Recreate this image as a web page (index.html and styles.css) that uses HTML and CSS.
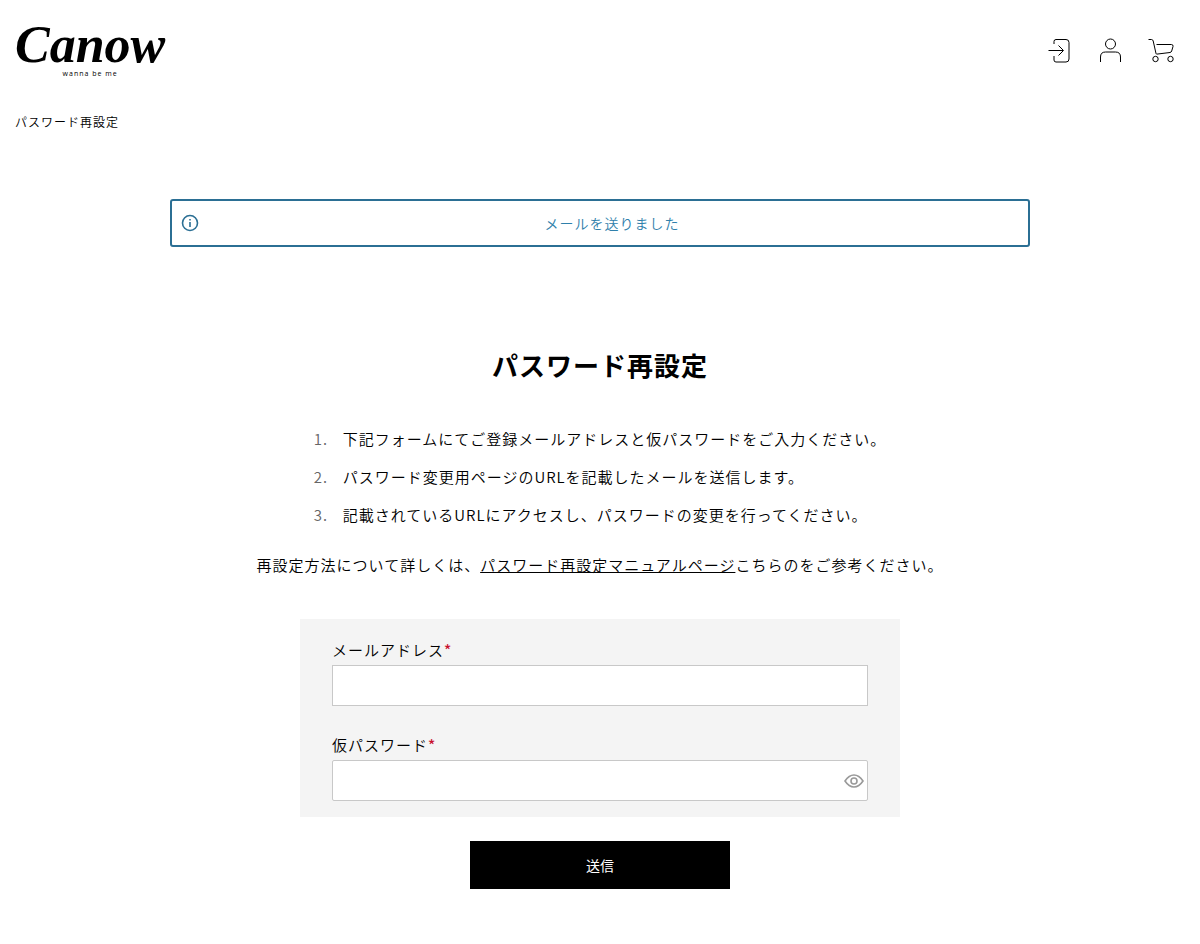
FILE: index.html
```html
<!DOCTYPE html>
<html lang="ja">
<head>
  <meta charset="UTF-8">
  <meta name="viewport" content="width=device-width, initial-scale=1">
  <title>パスワード再設定 | Canow</title>
  <link rel="stylesheet" href="styles.css">
</head>
<body>

<header class="header">
  <a href="#" class="logo">
    <span class="logo-name">Canow</span>
    <span class="logo-sub">wanna be me</span>
  </a>
  <nav class="header-nav">
    <a href="#" aria-label="ログイン">
      <svg width="28" height="28" viewBox="0 0 28 28">
        <path d="M8 8V5.500Q8 3.500 10 3.500H20Q23 3.500 23 6.500V23Q23 26 20 26H10Q8 26 8 24V20M2.500 14.500H17M12.500 9.500L17.500 14.500L12.500 19.500"/>
      </svg>
    </a>
    <a href="#" aria-label="マイページ">
      <svg width="28" height="28" viewBox="0 0 28 28">
        <circle cx="13.500" cy="8" r="5"/>
        <path d="M3.500 26V21Q3.500 16 8.500 16H18.500Q23.500 16 23.500 21V26"/>
      </svg>
    </a>
    <a href="#" aria-label="カート">
      <svg width="28" height="28" viewBox="0 0 28 28">
        <path d="M0.500 3.500H3.500Q4.800 3.500 5.200 5L8 17.500Q8.200 18.200 9 18.100L22 16.500Q23.300 16.300 23.700 15L25 10.500Q25.400 8.500 23.400 8.500H8.500"/>
        <circle cx="7.500" cy="23" r="2.700"/>
        <circle cx="22.500" cy="23" r="2.700"/>
      </svg>
    </a>
  </nav>
</header>

<div class="breadcrumb">パスワード再設定</div>

<main class="main">
  <div class="alert" role="status">
    <svg class="alert-icon" width="18" height="18" viewBox="0 0 18 18">
      <circle cx="9" cy="9" r="7.500"/>
      <path d="M9 8V13M9 5V6.500"/>
    </svg>
    <p>メールを送りました</p>
  </div>

  <h1>パスワード再設定</h1>

  <ol class="steps">
    <li>下記フォームにてご登録メールアドレスと仮パスワードをご入力ください。</li>
    <li>パスワード変更用ページのURLを記載したメールを送信します。</li>
    <li>記載されているURLにアクセスし、パスワードの変更を行ってください。</li>
  </ol>

  <p class="note">再設定方法について詳しくは、<a href="#">パスワード再設定マニュアルページ</a>こちらのをご参考ください。</p>

  <form class="form">
    <div class="form-box">
      <div class="form-group">
        <label for="email">メールアドレス<span class="required">*</span></label>
        <input type="email" id="email">
      </div>
      <div class="form-group">
        <label for="password">仮パスワード<span class="required">*</span></label>
        <div class="password">
          <input type="password" id="password">
          <button type="button" class="toggle" aria-label="パスワードを表示">
            <svg width="20" height="14" viewBox="0 0 20 14">
              <path d="M1 7Q5 1 10 1T19 7Q15 13 10 13T1 7Z"/>
              <circle cx="10" cy="7" r="3"/>
            </svg>
          </button>
        </div>
      </div>
    </div>
    <button type="submit" class="submit">送信</button>
  </form>
</main>

</body>
</html>
```
FILE: styles.css
```css
* {
  box-sizing: border-box;
}
body {
  margin: 0;
  font-family: "Noto Sans CJK JP", sans-serif;
  font-size: 15px;
  font-weight: 350;
  line-height: 30px;
  letter-spacing: 1px;
  color: #000;
  background: #fff;
}
p {
  margin: 0;
}
a {
  color: inherit;
}
svg {
  display: block;
  fill: none;
  stroke: #000;
}
.header {
  display: flex;
  justify-content: space-between;
  align-items: center;
  height: 100px;
  padding: 0 24px 0 15px;
}
.logo {
  display: flex;
  flex-direction: column;
  align-items: center;
  text-decoration: none;
}
.logo-name {
  font-family: "Liberation Serif", serif;
  font-size: 52px;
  font-style: italic;
  font-weight: 700;
  line-height: 48px;
  letter-spacing: 0;
}
.logo-sub {
  font-family: "Open Sans", sans-serif;
  font-size: 7px;
  font-weight: 400;
  line-height: 10px;
}
.header-nav {
  display: flex;
  gap: 23px;
}
.breadcrumb {
  padding: 7px 15px 8px;
  font-size: 12px;
}
.main {
  display: flex;
  flex-direction: column;
  align-items: center;
  padding: 54px 20px 55px;
}
.alert {
  display: flex;
  align-items: center;
  width: 100%;
  max-width: 860px;
  height: 48px;
  padding: 0 9px;
  border: 2px solid #2b6f94;
  border-radius: 3px;
  font-size: 14px;
  color: #2f80ab;
}
.alert p {
  flex: 1;
  margin-left: 6px;
  text-align: center;
}
.alert-icon {
  stroke: #2b6f94;
  stroke-width: 1.6;
}
h1 {
  margin: 98px 0 35px;
  font-size: 26px;
  font-weight: 700;
  line-height: 40px;
}
.steps {
  margin: 0 0 16px;
  padding: 0;
  list-style: none;
  counter-reset: step;
  line-height: 38px;
}
.steps li {
  display: flex;
  counter-increment: step;
}
.steps li::before {
  content: counter(step) ".";
  flex: 0 0 29px;
  color: #666;
}
.form {
  display: flex;
  flex-direction: column;
  align-items: center;
  gap: 24px;
  width: 100%;
  max-width: 600px;
  margin-top: 39px;
}
.form-box {
  display: flex;
  flex-direction: column;
  gap: 24px;
  width: 100%;
  padding: 16px 32px;
  background: #f4f4f4;
}
label {
  display: block;
}
.required {
  font-weight: 500;
  color: #c8102e;
}
input {
  display: block;
  width: 100%;
  height: 41px;
  padding: 0 12px;
  border: 1px solid #c8c8c8;
  border-radius: 0;
  font: inherit;
  background: #fff;
}
.password {
  position: relative;
}
.password input {
  padding-right: 32px;
  border-radius: 2px;
}
.toggle {
  position: absolute;
  top: 0;
  right: 4px;
  height: 100%;
  padding: 0;
  border: none;
  background: none;
  cursor: pointer;
}
.toggle svg {
  stroke: #999;
  stroke-width: 1.6;
}
.submit {
  width: 260px;
  height: 48px;
  border: none;
  font-family: inherit;
  font-size: 14px;
  font-weight: 400;
  color: #fff;
  background: #000;
  cursor: pointer;
}
```
